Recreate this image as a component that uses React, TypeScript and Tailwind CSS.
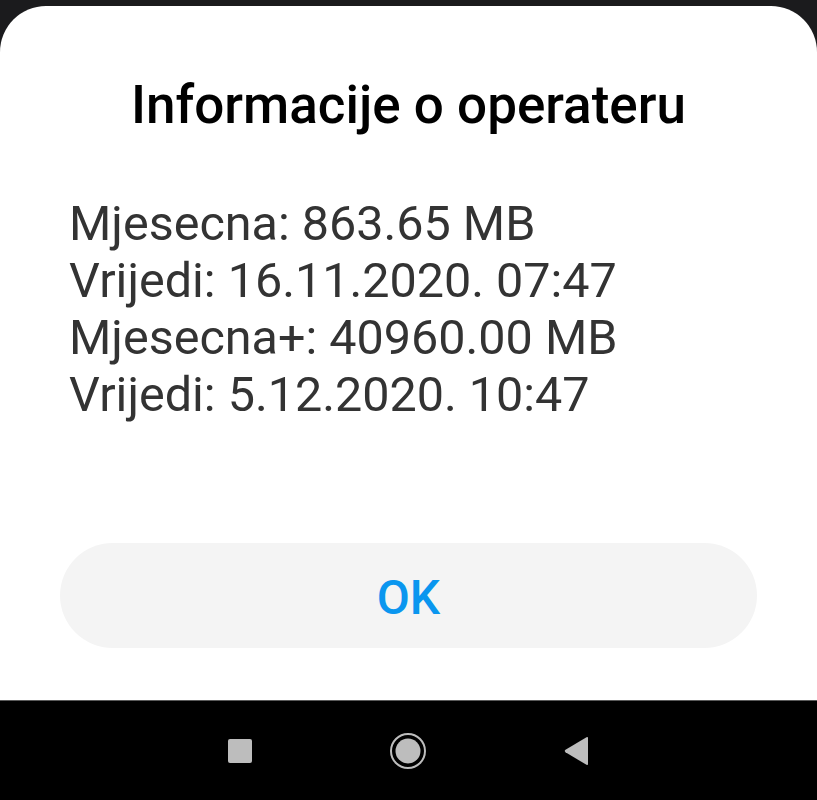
export default function App() {
  const lines = [
    'Mjesecna: 863.65 MB',
    'Vrijedi: 16.11.2020. 07:47',
    'Mjesecna+: 40960.00 MB',
    'Vrijedi: 5.12.2020. 10:47',
  ];

  return (
    <div className="w-[817px] h-[800px] flex flex-col bg-[#1b1b1d] overflow-hidden" style={{ fontFamily: 'Roboto, "Noto Sans", sans-serif' }}>
      {/* Dialog sheet */}
      <div className="mt-[6px] h-[694px] bg-white rounded-t-[46px] flex flex-col">
        <h1 className="mt-[71px] text-center text-[53px] leading-[56px] font-medium text-black">
          Informacije o operateru
        </h1>
        <div className="mt-[62px] pl-[69px] text-[#333333] text-[48.5px] leading-[57px]">
          {lines.map((line) => (
            <p key={line}>{line}</p>
          ))}
        </div>
        <div className="mt-[120px] mx-[60px] h-[105px] rounded-full bg-[#f4f4f4] flex items-center justify-center">
          <span className="text-[48px] leading-[56px] font-medium text-[#0a96ef] translate-y-[2px]">OK</span>
        </div>
      </div>

      {/* Navigation bar */}
      <div className="h-[100px] bg-black border-t border-[#5a5a5a] flex items-center justify-center gap-[137px]">
        <div className="w-[24px] h-[24px] rounded-[2px] bg-[#bdbdbd]" />
        <svg width="38" height="38" viewBox="0 0 38 38">
          <circle cx="19" cy="19" r="17" fill="none" stroke="#bdbdbd" strokeWidth="2" />
          <circle cx="19" cy="19" r="12.5" fill="#bdbdbd" />
        </svg>
        <svg width="26" height="30" viewBox="0 0 26 30">
          <path d="M24 2 L24 28 Q24 29.5 22.5 28.8 L1.5 16.2 Q0 15 1.5 13.8 L22.5 1.2 Q24 0.5 24 2 Z" fill="#bdbdbd" />
        </svg>
      </div>
    </div>
  );
}
